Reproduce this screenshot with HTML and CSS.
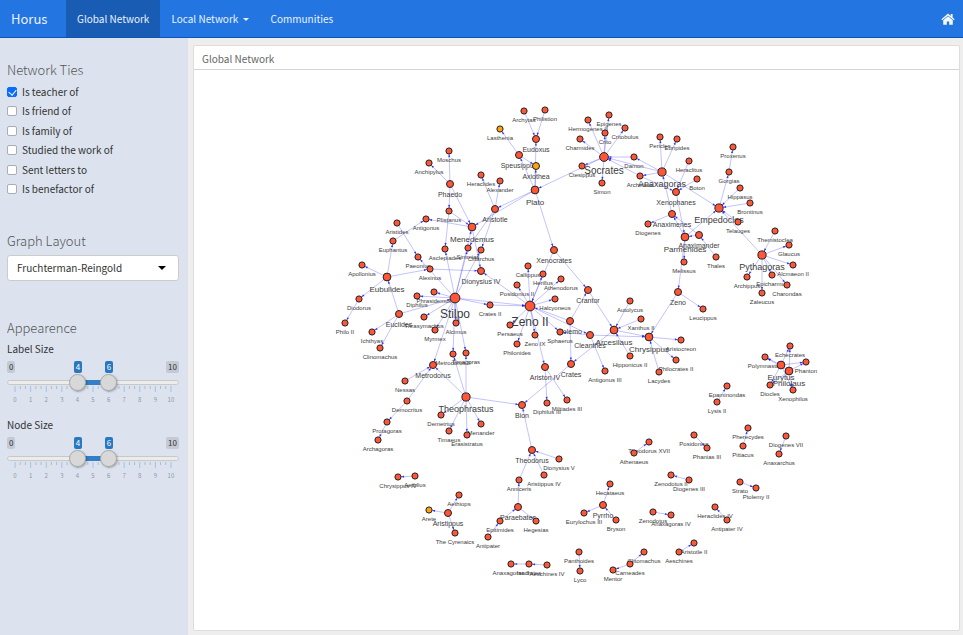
FILE: index.html
```html
<!DOCTYPE html>
<html lang="en">
<head>
<meta charset="utf-8">
<title>Horus</title>
<link rel="stylesheet" href="styles.css">
</head>
<body>
<nav class="navbar">
  <a class="brand" href="#">Horus</a>
  <a class="nav-link active" href="#">Global Network</a>
  <a class="nav-link" href="#">Local Network <span class="caret"></span></a>
  <a class="nav-link" href="#">Communities</a>
  <a class="home" href="#" aria-label="Home">
    <svg viewBox="0 0 14 12" width="14" height="12"><path d="M7 0.6 0.4 6.2 1.2 7.2 7 2.4 12.8 7.2 13.6 6.2 11.6 4.5V1H9.8V3Z"/><path d="M7 3.3 2.2 7.3V11.2Q2.2 11.7 2.7 11.7H5.8V8.4H8.2V11.7H11.3Q11.8 11.7 11.8 11.2V7.3Z"/></svg>
  </a>
</nav>
<div class="layout">
  <aside class="sidebar">
    <section class="group ties-group">
      <h2>Network Ties</h2>
      <div class="ties">
        <label><input type="checkbox" checked>Is teacher of</label>
        <label><input type="checkbox">Is friend of</label>
        <label><input type="checkbox">Is family of</label>
        <label><input type="checkbox">Studied the work of</label>
        <label><input type="checkbox">Sent letters to</label>
        <label><input type="checkbox">Is benefactor of</label>
      </div>
    </section>
    <section class="group layout-group">
      <h2><label for="layout">Graph Layout</label></h2>
      <div class="select">
        <select id="layout"><option>Fruchterman-Reingold</option></select>
        <span class="caret"></span>
      </div>
    </section>
    <section class="group">
      <h2>Appearence</h2>
      <div class="slider">
        <h3>Label Size</h3>
        <div class="tags"><span class="end">0</span><span class="tag low">4</span><span class="tag high">6</span><span class="end">10</span></div>
        <div class="rail">
          <div class="fill"></div>
          <input type="range" min="0" max="10" value="4" aria-label="Label size minimum">
          <input type="range" min="0" max="10" value="6" aria-label="Label size maximum">
        </div>
        <svg class="ticks" viewBox="0 0 171 22"></svg>
      </div>
      <div class="slider">
        <h3>Node Size</h3>
        <div class="tags"><span class="end">0</span><span class="tag low">4</span><span class="tag high">6</span><span class="end">10</span></div>
        <div class="rail">
          <div class="fill"></div>
          <input type="range" min="0" max="10" value="4" aria-label="Node size minimum">
          <input type="range" min="0" max="10" value="6" aria-label="Node size maximum">
        </div>
        <svg class="ticks" viewBox="0 0 171 22"></svg>
      </div>
    </section>
  </aside>
  <main class="content">
    <section class="panel">
      <h1>Global Network</h1>
      <svg class="graph" viewBox="194 70 765 560" role="img" aria-label="Teacher network"></svg>
    </section>
  </main>
</div>
<script src="graph.js"></script>
</body>
</html>
```
FILE: styles.css
```css
* { box-sizing: border-box; }
body {
  margin: 0;
  min-height: 100vh;
  display: flex;
  flex-direction: column;
  background: #eeeeee;
  color: #333;
  font-family: "Noto Sans CJK SC", "Open Sans", sans-serif;
  font-size: 10px;
  line-height: 16px;
}
h1, h2, h3 { margin: 0; font-weight: 400; }
.navbar {
  display: flex;
  height: 38px;
  background: #2375e1;
  border-bottom: 1px solid #0c54b8;
}
.navbar a {
  display: flex;
  align-items: center;
  color: #eaf2fd;
  text-decoration: none;
}
.navbar .brand { width: 66px; padding-left: 11px; font-size: 13px; }
.navbar .nav-link { padding: 0 11px; white-space: pre; }
.navbar .active { background: #185cb4; }
.navbar .home { margin-left: auto; padding-right: 8px; }
.home svg { fill: #f4f8ff; }
.caret {
  border: 3px solid transparent;
  border-top-color: currentColor;
  border-bottom: 0;
}
.nav-link .caret { margin: 2px 0 0 2px; }
.layout { flex: 1; display: flex; }
.sidebar {
  flex: 0 0 188px;
  padding: 22px 9px 0 7px;
  background: #dce3ef;
}
.group h2 {
  font-size: 13px;
  font-weight: 300;
  line-height: 20px;
  color: #555;
}
.ties-group { height: 171px; }
.ties {
  display: grid;
  grid-template-rows: repeat(6, 1fr);
  height: 117px;
  margin-top: 2px;
}
.ties label { display: flex; align-items: center; }
.ties input {
  appearance: none;
  position: relative;
  width: 10px;
  height: 10px;
  margin: 0 5px 0 0;
  background: #fff;
  border: 1px solid #a9adb4;
  border-radius: 2px;
}
.ties input:checked { background: #0a6cff; border-color: #0a6cff; }
.ties input:checked::after {
  content: "";
  position: absolute;
  left: 2px;
  top: 0;
  width: 4px;
  height: 6px;
  border: solid #fff;
  border-width: 0 1px 1px 0;
  transform: rotate(40deg);
}
.layout-group { height: 87px; }
.select { position: relative; margin-top: 4px; }
.select select {
  appearance: none;
  display: block;
  width: 100%;
  height: 26px;
  padding: 0 9px;
  border: 1px solid #ccc;
  border-radius: 3px;
  background: #fff;
  color: #333;
  font: inherit;
}
.select .caret {
  position: absolute;
  right: 13px;
  top: 11px;
  border-width: 4px;
  border-bottom: 0;
  color: #000;
  pointer-events: none;
}
.slider { height: 76px; padding-top: 2px; }
.slider h3 { font-size: 10px; line-height: 18px; }
.tags {
  position: relative;
  display: flex;
  justify-content: space-between;
  margin-top: 3px;
  font-size: 8px;
  line-height: 12px;
}
.tags .end { padding: 0 2px; border-radius: 2px; background: #c4cad4; }
.tags .tag {
  position: absolute;
  width: 8px;
  border-radius: 2px;
  background: #2878c0;
  color: #fff;
  text-align: center;
}
.tags .low { left: 39%; }
.tags .high { left: 57%; }
.rail {
  position: relative;
  height: 5px;
  margin-top: 7px;
  border: 1px solid #c8c8c8;
  border-radius: 3px;
  background: #ececec;
}
.fill {
  position: absolute;
  left: 41%;
  right: 41%;
  top: -1px;
  height: 5px;
  background: #337ec4;
}
.rail input {
  appearance: none;
  position: absolute;
  left: -1px;
  top: -7px;
  width: calc(100% + 2px);
  height: 17px;
  margin: 0;
  background: none;
  pointer-events: none;
}
.rail input::-webkit-slider-thumb {
  appearance: none;
  width: 17px;
  height: 17px;
  border: 1px solid #aaa;
  border-radius: 50%;
  background: #d8d8d8;
  box-shadow: 1px 1px 2px rgba(0, 0, 0, .25);
  pointer-events: auto;
}
.ticks { display: block; width: 100%; }
.ticks line { stroke: #b3bac6; }
.ticks .major { stroke: #9fc3e8; }
.ticks text { font-size: 6px; fill: #8f98a5; text-anchor: middle; }
.content { flex: 1; display: flex; min-width: 0; padding: 7px 3px 4px 5px; }
.panel {
  flex: 1;
  display: flex;
  flex-direction: column;
  min-width: 0;
  background: #fff;
  border: 1px solid #ddd;
  border-radius: 2px;
}
.panel h1 {
  height: 24px;
  padding: 2px 8px;
  border-bottom: 1px solid #d4d4d4;
  font-size: 10px;
  line-height: 21px;
  color: #666;
}
.graph { flex: 1; display: block; width: 100%; min-height: 0; }
.graph text {
  font-family: "Liberation Sans", Arial, sans-serif;
  fill: #3c3c3c;
  text-anchor: middle;
}
.graph .tie { stroke: #0000ff; stroke-opacity: .24; stroke-width: 1; }
.graph .tip { fill: #0000ff; fill-opacity: .75; }
.graph circle { fill: #ff5638; stroke: #222; stroke-width: 1; }
.graph .female { fill: #ffa010; }
```
FILE: graph.js
```js
// name | x | y | label size
const people = `Archytas|524|111|6
Philistion|545|110|6
Lasthenia|500|129|6
Eudoxus|536|139|7
Speusippus|519|155|7
Axiothea|536|166|7
Moschus|449|151|6
Anchipylus|429|163|6
Phaedo|450|184|7
Heraclides|481|175|6
Alexander|500|181|6
Plato|535|190|8
Aristotle|495|209|7
Plistanus|449|211|6
Menedemus|472|227|8
Antigonus|426|219|6
Aristides|397|223|6
Euphantus|393|241|6
Paeonius|418|257|6
Asclepiades|445|249|6
Simmias|468|248|6
Clitarchus|481|250|6
Hermogenes II|588|120|6
Epigenes|609|115|6
Crito|605|133|6
Critobulus|625|128|6
Charmides|580|139|6
Socrates|604|157|10
Damon|634|157|6
Ctesippus|582|166|6
Simon|602|183|6
Archelaus|640|176|6
Anaxagoras|662|172|9
Pericles|660|137|6
Euripides|677|139|6
Heraclitus|689|161|6
Boton|697|179|6
Xenophanes|676|192|7
Anaximenes|672|214|7
Diogenes|648|224|6
Parmenides|685|237|8
Anaximander|699|235|7
Xenocrates|554|250|7
Proxenus|733|147|6
Gorgias|729|172|6
Hippasus|740|188|6
Brontinus|750|203|6
Empedocles|719|208|9
Telauges|738|222|6
Themistoclea|775|231|6
Glaucus|789|245|6
Pythagoras|762|255|9
Alcmaeon II|793|265|6
Epicharmus|772|275|6
Archippus|747|277|6
Charondas|787|285|6
Zaleucus|762|293|6
Thales|716|257|6
Melissus|684|262|6
Zeno|678|292|7
Leucippus|703|309|6
Apollonius|362|265|6
Eubulides|387|277|8
Alexinus|430|269|6
Diodorus|359|299|6
Philo II|345|323|6
Euclides|399|314|7
Diphilus|417|296|6
Phrasidemus|434|292|6
Stilpo|455|298|12
Thrasymachus|424|317|6
Myrmex|435|330|6
Alcimus|456|323|6
Ichthyas|372|332|6
Clinomachus|380|348|6
Metrodorus II|453|354|6
Timagoras|466|353|6
Metrodorus|433|365|7
Nessas|405|381|6
Dionysius IV|481|271|7
Crates II|490|305|6
Callippus|528|266|6
Herillus|543|274|6
Athenodorus|561|279|6
Posidonius II|517|285|6
Halcyoneus|555|299|6
Zeno II|530|306|12
Persaeus|510|325|6
Zeno IX|535|335|6
Philonides|517|344|6
Sphaerus|560|332|6
Polemo|570|321|7
Crantor|588|290|7
Cleanthes|590|335|7
Arcesilaus|614|330|8
Autolycus|630|301|6
Xanthus II|641|319|6
Chrysippus|649|337|8
Hipponicus II|630|356|6
Antigonus III|605|371|6
Crates|571|364|7
Ariston IV|545|367|7
Lacydes|659|372|6
Philocrates II|676|360|6
Aristocreon|681|340|6
Epaminondas|727|386|6
Lysis II|717|402|6
Echecrates|790|346|6
Polymnastus|765|357|6
Eurytus|781|365|8
Philolaus|789|371|8
Phanton|806|362|6
Diocles|770|385|6
Xenophilus|793|390|6
Democritus|407|401|6
Protagoras|387|422|6
Archagoras|378|440|6
Theophrastus|466|397|9
Demetrius|441|415|6
Timaeus|449|431|6
Erasistratus|467|435|6
Menander|481|424|6
Bion|522|405|7
Diphilus III|547|403|6
Miltiades III|567|400|6
Theodorus|532|450|7
Dionysius V|559|459|6
Aristippus IV|544|475|6
Anniceris|519|480|6
Paraebates|518|507|7
Epitimides|500|521|6
Hegesias|536|521|6
Antipater|488|537|6
Chrysippus IV|398|477|6
Aethlius|415|476|6
Aethiops|459|495|6
Arete|429|510|6
Aristippus|448|513|7
The Cyrenaics|455|533|6
Anaxagoras II|511|564|6
Isocrates|529|564|6
Aeschines IV|547|565|6
Athenaeus|634|453|6
Theodorus XVII|649|442|6
Posidonius|694|435|6
Phanias III|707|448|6
Hecataeus|610|484|6
Pyrrho|603|505|7
Eurylochus III|584|513|6
Bryson|616|520|6
Zenodotus II|671|475|6
Diogenes III|689|480|6
Zenodotus|653|512|6
Anaxagoras IV|671|515|6
Heraclides IV|715|507|6
Antipater IV|727|520|6
Panthoides|579|552|6
Lyco|580|571|6
Clitomachus|644|552|6
Carneades|630|564|6
Mentor|613|570|6
Aeschines|679|552|6
Aristotle II|694|543|6
Pherecydes|748|428|6
Pittacus|743|446|6
Diogenes VII|786|436|6
Anaxarchus|779|454|6
Strato|740|482|6
Ptolemy II|756|488|6`;

// teacher > student, student ...
const ties = `Archytas>Eudoxus
Philistion>Eudoxus
Plato>Eudoxus,Speusippus,Axiothea,Aristotle,Xenocrates,Menedemus
Speusippus>Lasthenia,Axiothea
Phaedo>Moschus,Anchipylus,Plistanus,Menedemus
Aristotle>Heraclides,Alexander,Simmias,Clitarchus
Plistanus>Menedemus,Asclepiades
Menedemus>Antigonus,Dionysius IV
Aristides>Paeonius
Euphantus>Antigonus
Socrates>Hermogenes II,Epigenes,Crito,Critobulus,Charmides,Ctesippus,Simon,Plato
Damon>Socrates
Archelaus>Socrates,Xenophanes
Anaxagoras>Archelaus,Pericles,Euripides,Socrates,Damon,Empedocles
Heraclitus>Xenophanes
Boton>Xenophanes
Xenophanes>Parmenides
Anaximenes>Anaxagoras,Diogenes
Anaximander>Anaximenes,Parmenides
Thales>Anaximander
Parmenides>Melissus,Zeno,Empedocles,Anaximenes
Zeno>Leucippus,Chrysippus
Gorgias>Proxenus
Empedocles>Gorgias
Hippasus>Empedocles
Brontinus>Empedocles
Telauges>Empedocles
Pythagoras>Empedocles,Glaucus,Alcmaeon II,Epicharmus,Archippus,Charondas,Zaleucus
Themistoclea>Pythagoras
Eubulides>Apollonius,Euphantus,Alexinus,Diodorus
Diodorus>Philo II
Euclides>Eubulides,Ichthyas,Clinomachus,Stilpo
Alexinus>Dionysius IV
Stilpo>Paeonius,Asclepiades,Simmias,Clitarchus,Diphilus,Phrasidemus,Thrasymachus,Myrmex,Alcimus,Metrodorus II,Timagoras,Metrodorus,Crates II,Zeno II,Menedemus
Zeno II>Callippus,Herillus,Athenodorus,Posidonius II,Halcyoneus,Persaeus,Zeno IX,Philonides,Sphaerus,Cleanthes,Dionysius IV,Ariston IV
Crates II>Zeno II
Xenocrates>Zeno II,Crantor
Polemo>Zeno II,Crantor,Crates
Crantor>Arcesilaus
Cleanthes>Sphaerus,Chrysippus,Antigonus III
Autolycus>Arcesilaus
Xanthus II>Arcesilaus
Hipponicus II>Arcesilaus
Arcesilaus>Chrysippus,Crates
Lacydes>Chrysippus
Chrysippus>Philocrates II,Aristocreon
Crates>Bion
Ariston IV>Diphilus III,Miltiades III
Nessas>Metrodorus
Democritus>Metrodorus,Protagoras
Protagoras>Archagoras
Theophrastus>Metrodorus,Metrodorus II,Timagoras,Demetrius,Timaeus,Erasistratus,Menander,Bion
Theodorus>Bion
Dionysius V>Theodorus
Aristippus IV>Theodorus
Anniceris>Theodorus
Paraebates>Anniceris,Hegesias
Epitimides>Paraebates
Antipater>Epitimides
Aethlius>Chrysippus IV
Aristippus>Aethiops,Arete,The Cyrenaics
Isocrates>Anaxagoras II
Aeschines IV>Isocrates
Athenaeus>Theodorus XVII
Posidonius>Phanias III
Pyrrho>Hecataeus,Eurylochus III
Bryson>Pyrrho
Diogenes III>Zenodotus II
Zenodotus>Anaxagoras IV
Antipater IV>Heraclides IV
Panthoides>Lyco
Carneades>Clitomachus,Mentor
Aeschines>Aristotle II
Pittacus>Pherecydes
Diogenes VII>Anaxarchus
Strato>Ptolemy II
Lysis II>Epaminondas
Eurytus>Echecrates,Polymnastus,Phanton,Diocles,Xenophilus
Philolaus>Echecrates,Polymnastus,Phanton,Diocles,Xenophilus`;

const NS = "http://www.w3.org/2000/svg";
function add(parent, tag, attrs, text) {
  const el = document.createElementNS(NS, tag);
  for (const key in attrs) el.setAttribute(key, attrs[key]);
  if (text !== undefined) el.textContent = text;
  parent.appendChild(el);
  return el;
}

const radius = { 6: 3.1, 7: 3.5, 8: 3.9, 9: 4.1, 10: 4.4, 12: 4.9 };
const drop = { 6: 11, 7: 13, 8: 15, 9: 15, 10: 17, 12: 20 };
const female = new Set(["Lasthenia", "Axiothea", "Arete"]);
const graph = document.querySelector(".graph");
const nodes = {};
for (const row of people.split("\n")) {
  const [name, x, y, size] = row.split("|");
  nodes[name] = { name, x: +x, y: +y, size: +size, r: radius[size] };
}

for (const row of ties.split("\n")) {
  const [from, list] = row.split(">");
  for (const to of list.split(",")) {
    const a = nodes[from], b = nodes[to];
    add(graph, "line", { class: "tie", x1: a.x, y1: a.y, x2: b.x, y2: b.y });
    const len = Math.hypot(b.x - a.x, b.y - a.y);
    const ux = (b.x - a.x) / len, uy = (b.y - a.y) / len;
    const tx = b.x - ux * b.r, ty = b.y - uy * b.r;
    const bx = tx - ux * 3, by = ty - uy * 3;
    add(graph, "polygon", {
      class: "tip",
      points: `${tx},${ty} ${bx - uy * 1.1},${by + ux * 1.1} ${bx + uy * 1.1},${by - ux * 1.1}`
    });
  }
}
for (const n of Object.values(nodes)) {
  add(graph, "text", { x: n.x, y: n.y + drop[n.size], "font-size": n.size }, n.name);
}
for (const n of Object.values(nodes)) {
  add(graph, "circle", { cx: n.x, cy: n.y, r: n.r, class: female.has(n.name) ? "female" : "male" });
}

for (const scale of document.querySelectorAll(".ticks")) {
  for (let i = 0; i <= 30; i++) {
    const x = 8 + i * 155 / 30, major = i % 3 === 0;
    add(scale, "line", { x1: x, x2: x, y1: 1, y2: major ? 7 : 4, class: major ? "major" : "minor" });
    if (major) add(scale, "text", { x, y: 17 }, i / 3);
  }
}
```
